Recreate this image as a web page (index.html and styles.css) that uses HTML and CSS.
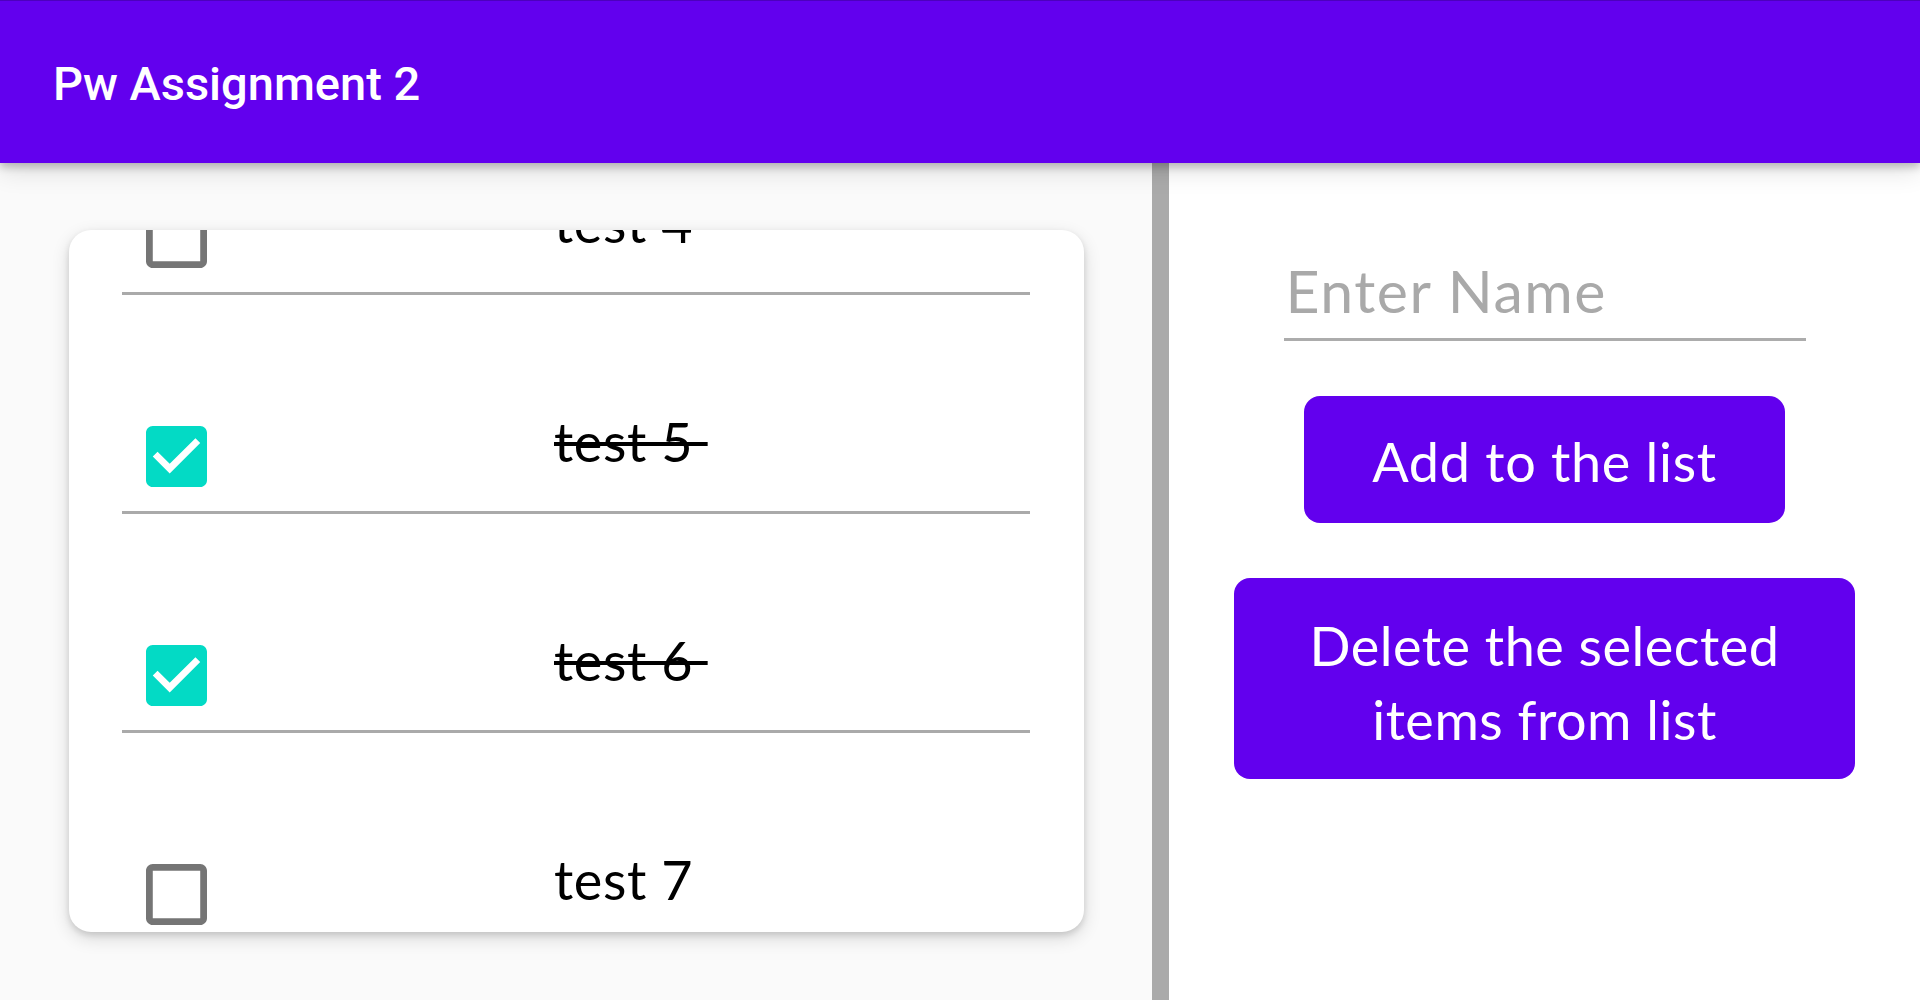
FILE: index.html
```html
<!DOCTYPE html>
<html lang="en">
<head>
<meta charset="utf-8">
<title>Pw Assignment 2</title>
<link rel="stylesheet" href="styles.css">
</head>
<body>
<header class="appbar">
  <h1 class="title">Pw Assignment 2</h1>
</header>
<main class="content">
  <section class="list-pane">
    <div class="card">
      <ul class="todo-list">
        <li class="todo-item">
          <svg class="checkbox" viewBox="3 3 18 18"><path class="box-off" d="M19 5v14H5V5h14m0-2H5c-1.1 0-2 .9-2 2v14c0 1.1.9 2 2 2h14c1.1 0 2-.9 2-2V5c0-1.1-.9-2-2-2z"/></svg>
          <span class="label">test 4</span>
        </li>
        <li class="todo-item">
          <svg class="checkbox" viewBox="3 3 18 18"><path class="box-on" d="M19 3H5c-1.11 0-2 .9-2 2v14c0 1.1.89 2 2 2h14c1.11 0 2-.9 2-2V5c0-1.1-.89-2-2-2zm-9 14l-5-5 1.41-1.41L10 14.170l7.59-7.59L19 8l-9 9z"/></svg>
          <span class="label done">test 5 </span>
        </li>
        <li class="todo-item">
          <svg class="checkbox" viewBox="3 3 18 18"><path class="box-on" d="M19 3H5c-1.11 0-2 .9-2 2v14c0 1.1.89 2 2 2h14c1.11 0 2-.9 2-2V5c0-1.1-.89-2-2-2zm-9 14l-5-5 1.41-1.41L10 14.17l7.59-7.59L19 8l-9 9z"/></svg>
          <span class="label done">test 6 </span>
        </li>
        <li class="todo-item">
          <svg class="checkbox" viewBox="3 3 18 18"><path class="box-off" d="M19 5v14H5V5h14m0-2H5c-1.1 0-2 .9-2 2v14c0 1.1.9 2 2 2h14c1.1 0 2-.9 2-2V5c0-1.1-.9-2-2-2z"/></svg>
          <span class="label">test 7</span>
        </li>
      </ul>
    </div>
  </section>
  <div class="divider"></div>
  <section class="form-pane">
    <input class="name-input" type="text" placeholder="Enter Name">
    <button class="btn btn-add">Add to the list</button>
    <button class="btn btn-delete">Delete the selected<br>items from list</button>
  </section>
</main>
</body>
</html>
```
FILE: styles.css
```css
html, body {
  margin: 0;
  padding: 0;
}

body {
  width: 1920px;
  height: 1000px;
  overflow: hidden;
  background: #ffffff;
  font-family: "Lato", "Noto Sans", sans-serif;
}

.appbar {
  position: relative;
  z-index: 2;
  height: 163px;
  box-sizing: border-box;
  border-top: 1px solid #4d00bd;
  background: #6200ee;
  display: flex;
  align-items: center;
  padding: 2px 0 0 53px;
  box-shadow: 0 4px 8px rgba(0, 0, 0, 0.22), 0 8px 24px rgba(0, 0, 0, 0.12);
}

.title {
  margin: 0;
  font-family: "Roboto", "Liberation Sans", sans-serif;
  font-weight: 500;
  font-size: 47px;
  color: #ffffff;
}

.content {
  display: flex;
  height: 837px;
}

.list-pane {
  width: 1152px;
  flex: none;
  box-sizing: border-box;
  background: #fafafa;
  padding: 67px 0 0 69px;
}

.card {
  width: 1015px;
  height: 702px;
  box-sizing: border-box;
  padding: 0 54px 0 53px;
  background: #ffffff;
  border-radius: 22px;
  overflow: hidden;
  box-shadow: 0 3px 6px rgba(0, 0, 0, 0.12), 0 6px 18px rgba(0, 0, 0, 0.14);
}

.todo-list {
  list-style: none;
  margin: -154px 0 0;
  padding: 0;
}

.todo-item {
  height: 216px;
  border-bottom: 3px solid #aaaaaa;
  display: flex;
  align-items: flex-end;
}

.checkbox {
  flex: none;
  width: 61px;
  height: 61px;
  margin: 0 0 24px 24px;
}

.box-off {
  fill: #757575;
}

.box-on {
  fill: #03dac5;
}

.label {
  margin: 0 0 42px 347px;
  font-size: 54px;
  line-height: 54px;
  letter-spacing: 0.6px;
  color: #000000;
  white-space: pre;
}

.label.done {
  text-decoration: line-through;
  text-decoration-thickness: 4px;
}

.divider {
  flex: none;
  width: 17px;
  background: #aaaaaa;
}

.form-pane {
  flex: 1;
  background: #ffffff;
  display: flex;
  flex-direction: column;
  align-items: center;
  padding-top: 90px;
  gap: 55px;
}

.name-input {
  width: 522px;
  height: 88px;
  box-sizing: border-box;
  padding: 1px 2px 12px;
  border: none;
  border-bottom: 3px solid #acacac;
  background: transparent;
  font-family: "Lato", "Noto Sans", sans-serif;
  font-size: 59px;
  letter-spacing: 1.5px;
  color: #222222;
  outline: none;
}

.name-input::placeholder {
  color: #a9a9a9;
}

.btn {
  border: none;
  border-radius: 16px;
  background: #6200ee;
  color: #ffffff;
  font-family: "Lato", "Noto Sans", sans-serif;
  font-size: 54px;
  line-height: 1.2;
  letter-spacing: 0.7px;
  text-align: center;
  padding: 0;
}

.btn-add {
  width: 481px;
  height: 127px;
  padding-top: 5px;
}

.btn-delete {
  width: 621px;
  height: 201px;
  line-height: 74px;
  padding-top: 8px;
  letter-spacing: 0.5px;
}
```
